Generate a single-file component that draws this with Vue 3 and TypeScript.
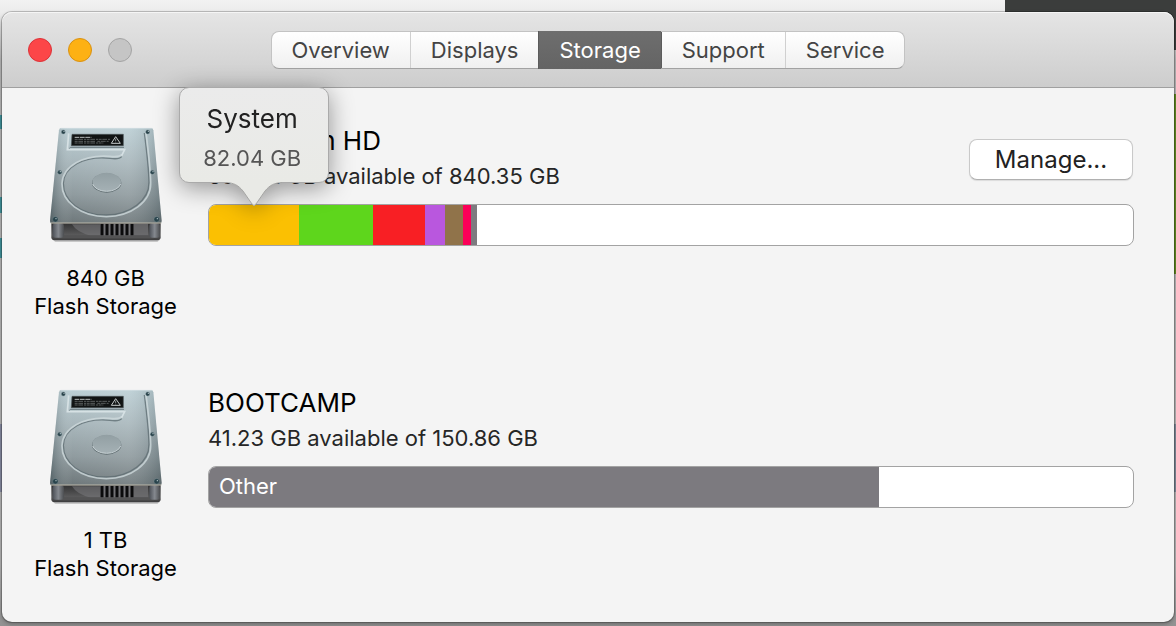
<script setup lang="ts">
import { computed } from 'vue'

interface Segment {
  name: string
  size: number
  color: string
  showLabel?: boolean
}

interface Volume {
  name: string
  available: string
  capacity: number
  drive: string
  kind: string
  manageable: boolean
  segments: Segment[]
}

const tabs = ['Overview', 'Displays', 'Storage', 'Support', 'Service']
const activeTab = 'Storage'

const volumes: Volume[] = [
  {
    name: 'Macintosh HD',
    available: '596.62',
    capacity: 840.35,
    drive: '840 GB',
    kind: 'Flash Storage',
    manageable: true,
    segments: [
      { name: 'System', size: 82.04, color: '#fbc002' },
      { name: 'Apps', size: 67.2, color: '#5ed61c' },
      { name: 'Photos', size: 47.3, color: '#f81f24' },
      { name: 'Audio', size: 18.2, color: '#b957de' },
      { name: 'Movies', size: 16.4, color: '#90734a' },
      { name: 'Mail', size: 7.3, color: '#fb0058' },
      { name: 'Other', size: 5.4, color: '#7e7b80' },
    ],
  },
  {
    name: 'BOOTCAMP',
    available: '41.23',
    capacity: 150.86,
    drive: '1 TB',
    kind: 'Flash Storage',
    manageable: false,
    segments: [{ name: 'Other', size: 109.4, color: '#7c7a7f', showLabel: true }],
  },
]

const share = (size: number, capacity: number) => `${(size / capacity) * 100}%`

const hovered = volumes[0].segments[0]
const tipLeft = computed(() => share(hovered.size / 2, volumes[0].capacity))
</script>

<template>
  <div class="desktop">
    <main class="window">
      <header class="titlebar">
        <div class="lights">
          <button class="light close" type="button" aria-label="Close"></button>
          <button class="light minimize" type="button" aria-label="Minimize"></button>
          <button class="light zoom" type="button" aria-label="Zoom" disabled></button>
        </div>
        <nav class="tabs">
          <button
            v-for="tab in tabs"
            :key="tab"
            type="button"
            class="tab"
            :class="{ active: tab === activeTab }"
          >{{ tab }}</button>
        </nav>
      </header>

      <section v-for="(volume, v) in volumes" :key="volume.name" class="volume">
        <div class="drive">
          <svg class="disk" viewBox="28 36 336 348" aria-hidden="true">
            <defs>
              <linearGradient :id="`lid${v}`" x1="0" y1="0" x2="0" y2="1">
                <stop offset="0" stop-color="#b9cdd3" />
                <stop offset="0.35" stop-color="#a6b5ba" />
                <stop offset="0.7" stop-color="#8b979b" />
                <stop offset="1" stop-color="#687275" />
              </linearGradient>
              <linearGradient :id="`side${v}`" x1="0" y1="0" x2="1" y2="0">
                <stop offset="0" stop-color="#24383f" stop-opacity="0.35" />
                <stop offset="0.2" stop-color="#fff" stop-opacity="0.04" />
                <stop offset="0.7" stop-color="#fff" stop-opacity="0.12" />
                <stop offset="1" stop-color="#31434a" stop-opacity="0.25" />
              </linearGradient>
              <linearGradient :id="`base${v}`" x1="0" y1="0" x2="0" y2="1">
                <stop offset="0" stop-color="#2f2f30" />
                <stop offset="0.7" stop-color="#5a5a5b" />
                <stop offset="1" stop-color="#3a3a3b" />
              </linearGradient>
              <linearGradient :id="`post${v}`" x1="0" y1="0" x2="1" y2="0">
                <stop offset="0" stop-color="#4c5057" />
                <stop offset="0.5" stop-color="#85898f" />
                <stop offset="1" stop-color="#4b4d50" />
              </linearGradient>
              <linearGradient :id="`hub${v}`" x1="0" y1="0" x2="0" y2="1">
                <stop offset="0" stop-color="#929fa3" />
                <stop offset="1" stop-color="#a5b1b5" />
              </linearGradient>
            </defs>
            <path d="M36 374H358L350 381H44Z" fill="#000" opacity="0.18" />
            <path d="M32 322H360V367Q360 376 350 376H42Q32 376 32 367Z" :fill="`url(#base${v})`" />
            <path d="M94 328H180V362H150Q108 352 94 328Z" fill="#77777a" opacity="0.6" />
            <path d="M278 326H322V362H278Z" fill="#6e6e70" opacity="0.8" />
            <path d="M72 361H326L340 370H52Z" fill="#535354" />
            <rect x="36" y="325" width="34" height="43" rx="9" :fill="`url(#post${v})`" />
            <rect x="326" y="325" width="32" height="43" rx="9" :fill="`url(#post${v})`" />
            <rect x="178" y="326" width="101" height="35" fill="#737376" />
            <path d="M184 326V361M199 326V361M214 326V361M229 326V361M244 326V361M259 326V361M274 326V361" stroke="#0b0b0c" stroke-width="9" />
            <path d="M62 39H330Q337 39 338 46L363 318Q363 325 357 325H34Q28 325 28 318L55 46Q56 39 62 39Z" :fill="`url(#lid${v})`" />
            <path d="M62 39H330Q337 39 338 46L363 318Q363 325 357 325H34Q28 325 28 318L55 46Q56 39 62 39Z" :fill="`url(#side${v})`" />
            <path d="M60 40H333" stroke="#d6e2e5" stroke-width="2" />
            <path d="M30 324H362" stroke="#bdb8aa" stroke-width="3" />
            <path d="M311 54C317 100 324 155 325 202C326 256 268 299 197 300C122 301 67 258 68 205C70 156 128 122 208 130C228 133 238 131 243 125" fill="none" stroke="#5c6b70" stroke-width="4" opacity="0.75" />
            <path d="M316 54C322 100 329 155 330 204C331 261 271 304 197 305C120 305 63 260 64 206C66 154 128 118 207 124C231 127 240 124 244 118" fill="none" stroke="#ced9dc" stroke-width="5" opacity="0.8" />
            <path d="M84 55L80 104H252L243 122" fill="none" stroke="#d6e1e4" stroke-width="5" />
            <path d="M86 100L90 97H250" fill="none" stroke="#68777d" stroke-width="3" />
            <ellipse cx="198" cy="204" rx="44" ry="29" fill="#606d71" />
            <ellipse cx="198" cy="201" rx="43" ry="28" :fill="`url(#hub${v})`" />
            <path d="M156 207A43 28 0 0 0 240 207" fill="none" stroke="#c7d1d4" stroke-width="3" />
            <path d="M94 58H248V92H92Z" fill="#111414" stroke="#4b5557" stroke-width="2" />
            <path d="M102 67H152" stroke="#b8bcbc" stroke-width="3" stroke-dasharray="14 2" />
            <path d="M102 73H208M102 79H164M170 79H205M102 84H188" stroke="#7d8282" stroke-width="2" stroke-dasharray="9 2 14 3 6 2" />
            <path d="M225 65L212 85H239Z" fill="none" stroke="#c3c8c8" stroke-width="3" />
            <path d="M225 71V78M225 80V82" stroke="#c3c8c8" stroke-width="2" />
            <g fill="#29434b" stroke="#7f959b" stroke-width="1">
              <circle cx="68" cy="51" r="6" /><circle cx="321" cy="51" r="6" />
              <circle cx="57" cy="172" r="6" /><circle cx="335" cy="172" r="6" />
              <circle cx="44" cy="313" r="8" /><circle cx="348" cy="313" r="8" />
            </g>
            <g fill="#b9c9cd">
              <circle cx="70" cy="49" r="2" /><circle cx="323" cy="49" r="2" />
              <circle cx="59" cy="170" r="2" /><circle cx="337" cy="170" r="2" />
              <circle cx="46" cy="311" r="2" /><circle cx="350" cy="311" r="2" />
            </g>
          </svg>
          <p class="caption">{{ volume.drive }}<br />{{ volume.kind }}</p>
        </div>

        <div class="details">
          <div class="heading">
            <div>
              <h2 class="name">{{ volume.name }}</h2>
              <p class="space">{{ volume.available }} GB available of {{ volume.capacity }} GB</p>
            </div>
            <button v-if="volume.manageable" class="manage" type="button">Manage...</button>
          </div>
          <div class="usage">
            <div class="bar">
              <div
                v-for="segment in volume.segments"
                :key="segment.name"
                class="segment"
                :style="{ width: share(segment.size, volume.capacity), background: segment.color }"
              ><span v-if="segment.showLabel">{{ segment.name }}</span></div>
            </div>
            <div v-if="v === 0" class="tip" role="tooltip" :style="{ left: tipLeft }">
              <div class="bubble">
                <strong class="tip-name">{{ hovered.name }}</strong>
                <span class="tip-size">{{ hovered.size }} GB</span>
              </div>
              <svg class="arrow" viewBox="0 0 56 25" aria-hidden="true">
                <path d="M0 0V1C8 1 12 3 17 9L26 22Q28 25 30 22L39 9C44 3 48 1 56 1V0Z" fill="#e9eae6" />
                <path d="M0 0.500C8 1 12 3 17 9L26 22Q28 25 30 22L39 9C44 3 48 1 56 0.500" fill="none" stroke="#a5a5a3" />
              </svg>
            </div>
          </div>
        </div>
      </section>
    </main>
  </div>
</template>

<style>
body {
  margin: 0;
}
</style>

<style scoped>
.desktop {
  box-sizing: border-box;
  min-height: 100vh;
  padding: 12px 2px 4px;
  display: flex;
  background:
    linear-gradient(#3b3d3c, #3b3d3c) right top / 171px 50px no-repeat,
    linear-gradient(#5f8720, #5f8720) right 94px / 2px 180px no-repeat,
    linear-gradient(#7c8794, #7c8794) right 424px / 2px 68px no-repeat,
    linear-gradient(#3f8f98, #3f8f98) left 115px / 2px 14px no-repeat,
    linear-gradient(#3f8f98, #3f8f98) left 197px / 2px 16px no-repeat,
    linear-gradient(#3f8f98, #3f8f98) left 238px / 2px 20px no-repeat,
    linear-gradient(#82869c, #82869c) left 424px / 2px 68px no-repeat,
    linear-gradient(#f2f2f2 0, #ececec 12px, #b4b4b4 60px, #b0b0b0 90%, #929292 100%);
  font-family: Inter, Roboto, "Liberation Sans", sans-serif;
  font-weight: 400;
  color: #000;
}

.window {
  flex: 1;
  min-width: 0;
  background: #f4f4f4;
  border-radius: 10px;
  box-shadow: 0 0 0 1px rgba(0, 0, 0, 0.2), 0 2px 4px rgba(0, 0, 0, 0.3);
}

.titlebar {
  box-sizing: border-box;
  height: 76px;
  padding: 0 26px;
  display: grid;
  grid-template-columns: 1fr auto 1fr;
  align-items: center;
  background: linear-gradient(#e5e5e5, #cdcdcd);
  border-bottom: 1px solid #a0a0a0;
  border-radius: 10px 10px 0 0;
  box-shadow: inset 0 1px 0 #f5f5f5;
}

.lights {
  display: flex;
  gap: 16px;
}

.light {
  width: 24px;
  height: 24px;
  padding: 0;
  border: 1px solid;
  border-radius: 50%;
}

.close {
  background: #fc4648;
  border-color: #dc3238;
}

.minimize {
  background: #fdb114;
  border-color: #d99112;
}

.zoom {
  background: #c5c5c5;
  border-color: #a4a4a4;
}

.tabs {
  display: flex;
  border: 1px solid #c3c3c3;
  border-bottom-color: #a2a2a2;
  border-radius: 8px;
  background: linear-gradient(#fff, #f0f0f0);
}

.tab {
  height: 36px;
  padding: 0 20px;
  border: 0;
  border-left: 1px solid #d0d0d0;
  background: none;
  font: 400 22px/36px Inter, Roboto, sans-serif;
  color: #444;
}

.tab:first-child {
  border-left: 0;
}

.tab.active {
  margin: -1px 0;
  height: 38px;
  background: linear-gradient(#6e6e6e, #646464);
  border-left-color: #5c5c5c;
  color: #fff;
}

.tab.active + .tab {
  border-left-color: #5c5c5c;
}

.volume {
  box-sizing: border-box;
  min-height: 262px;
  padding: 36px 40px 0 32px;
  display: grid;
  grid-template-columns: 143px 1fr;
  column-gap: 31px;
}

.drive {
  display: flex;
  flex-direction: column;
  align-items: center;
}

.disk {
  margin-top: 3px;
  width: 112px;
  height: 116px;
}

.caption {
  margin: 21px 0 0;
  font-size: 22px;
  line-height: 28px;
  text-align: center;
  white-space: nowrap;
}

.heading {
  display: flex;
  justify-content: space-between;
  align-items: flex-start;
}

.name {
  margin: 0;
  font-size: 26px;
  line-height: 34px;
  font-weight: 400;
}

.space {
  margin: 4px 0 0;
  font-size: 22px;
  line-height: 28px;
  font-weight: 430;
  color: #262626;
}

.manage {
  width: 164px;
  height: 41px;
  margin: 15px 1px 0 0;
  padding: 0;
  border: 1px solid #c9c9c9;
  border-bottom-color: #b0b0b0;
  border-radius: 8px;
  background: #fff;
  box-shadow: 0 1px 1px rgba(0, 0, 0, 0.1);
  font: 400 24px/38px Inter, Roboto, sans-serif;
  color: #222;
}

.usage {
  position: relative;
  margin-top: 14px;
}

.bar {
  box-sizing: border-box;
  height: 42px;
  display: flex;
  overflow: hidden;
  border: 1px solid #a3a3a3;
  border-radius: 8px;
  background: #fff;
}

.segment {
  flex: none;
  font-size: 22px;
  line-height: 38px;
  color: #fff;
}

.segment span {
  padding-left: 10px;
}

.tip {
  position: absolute;
  bottom: 39px;
  margin-left: 1px;
  display: flex;
  flex-direction: column;
  align-items: center;
  transform: translateX(-50%);
  filter: drop-shadow(0 5px 12px rgba(0, 0, 0, 0.4));
}

.bubble {
  box-sizing: border-box;
  width: 150px;
  height: 96px;
  padding: 14px 4px 0 0;
  border: 1px solid #aaa;
  border-radius: 10px;
  background: linear-gradient(#ebebeb, #e9eae6);
  text-align: center;
}

.tip-name,
.tip-size {
  display: block;
}

.tip-name {
  font-size: 26px;
  line-height: 34px;
  font-weight: 400;
  color: #222;
}

.tip-size {
  margin-top: 8px;
  font-size: 22px;
  line-height: 28px;
  color: #555;
}

.arrow {
  width: 56px;
  height: 25px;
  margin-top: -1px;
}
</style>
